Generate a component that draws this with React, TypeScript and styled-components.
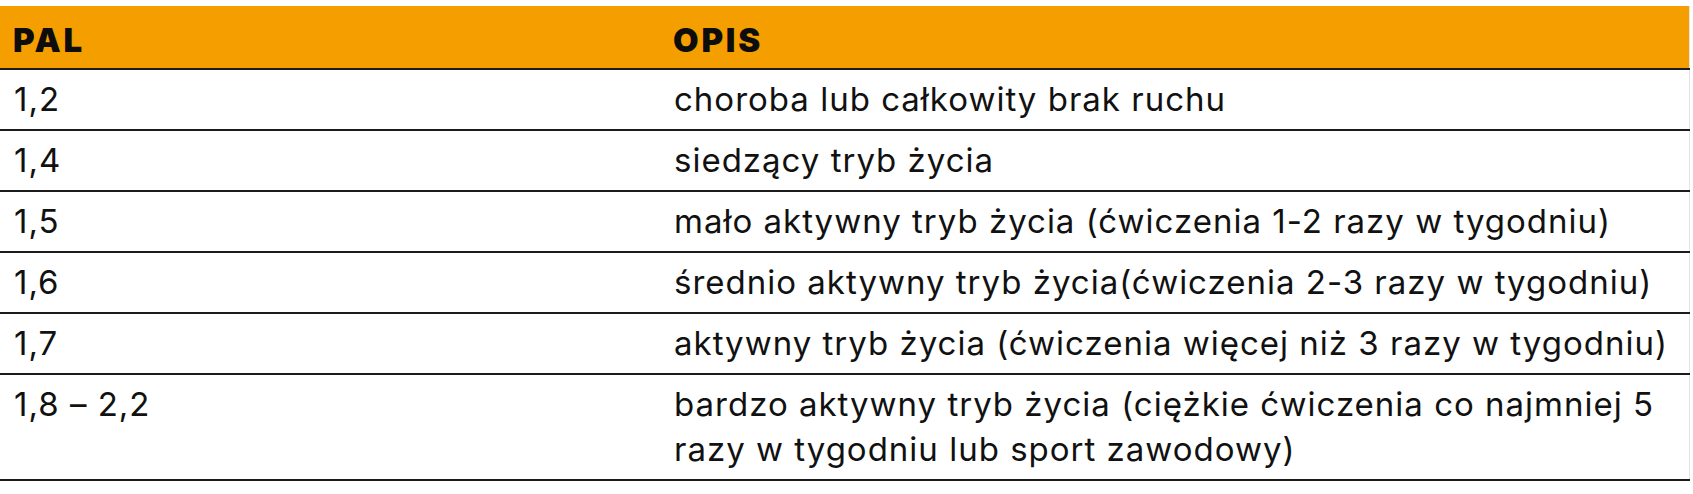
import React from 'react';
import styled, { createGlobalStyle } from 'styled-components';

const GlobalStyle = createGlobalStyle`
	html, body {
		margin: 0;
		padding: 0;
		background: #ffffff;
	}
	body {
		font-family: 'Inter', 'Liberation Sans', sans-serif;
		color: #111111;
	}
`;

const Page = styled.div`
	padding-top: 6px;
	width: 1693px;
`;

const Table = styled.table`
	width: 1690px;
	border-collapse: collapse;
	table-layout: fixed;
	border-right: 1px solid #e4e4e4;
`;

const HeadRow = styled.tr`
	background: #f49e00;
	height: 63px;
`;

const HeadCell = styled.th<{ $width?: number }>`
	width: ${(p) => (p.$width ? `${p.$width}px` : 'auto')};
	padding: 5px 13px 0;
	text-align: left;
	font-weight: 900;
	font-size: 33px;
	letter-spacing: 2.8px;
	color: #0d0d0d;
	border-bottom: 2px solid #1b1b1b;
`;

const Row = styled.tr`
	border-bottom: 2px solid #1b1b1b;
`;

const Cell = styled.td`
	padding: 7px 14px;
	vertical-align: top;
	font-size: 33px;
	line-height: 45px;
	letter-spacing: 1px;
	font-weight: 400;
	white-space: nowrap;
`;

interface Level {
	pal: string;
	lines: string[];
}

const levels: Level[] = [
	{ pal: '1,2', lines: ['choroba lub całkowity brak ruchu'] },
	{ pal: '1,4', lines: ['siedzący tryb życia'] },
	{ pal: '1,5', lines: ['mało aktywny tryb życia (ćwiczenia 1-2 razy w tygodniu)'] },
	{ pal: '1,6', lines: ['średnio aktywny tryb życia(ćwiczenia 2-3 razy w tygodniu)'] },
	{ pal: '1,7', lines: ['aktywny tryb życia (ćwiczenia więcej niż 3 razy w tygodniu)'] },
	{
		pal: '1,8 – 2,2',
		lines: [
			'bardzo aktywny tryb życia (ciężkie ćwiczenia co najmniej 5',
			'razy w tygodniu lub sport zawodowy)',
		],
	},
];

const App = (): JSX.Element => {
	return (
		<Page>
			<GlobalStyle />
			<Table>
				<thead>
					<HeadRow>
						<HeadCell $width={634}>PAL</HeadCell>
						<HeadCell>OPIS</HeadCell>
					</HeadRow>
				</thead>
				<tbody>
					{levels.map((level) => (
						<Row key={level.pal}>
							<Cell>{level.pal}</Cell>
							<Cell>
								{level.lines.map((line, i) => (
									<React.Fragment key={i}>
										{i > 0 && <br />}
										{line}
									</React.Fragment>
								))}
							</Cell>
						</Row>
					))}
				</tbody>
			</Table>
		</Page>
	);
};

export default App;
